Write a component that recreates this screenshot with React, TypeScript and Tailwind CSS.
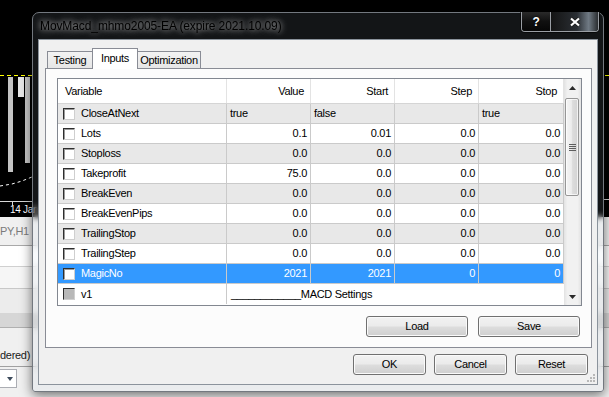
import React from "react";

type Row = { name: string; vals: string[]; words?: boolean; sel?: boolean };

const cols = ["Value", "Start", "Step", "Stop"];

const rows: Row[] = [
  { name: "CloseAtNext", vals: ["true", "false", "", "true"], words: true },
  { name: "Lots", vals: ["0.1", "0.01", "0.0", "0.0"] },
  { name: "Stoploss", vals: ["0.0", "0.0", "0.0", "0.0"] },
  { name: "Takeprofit", vals: ["75.0", "0.0", "0.0", "0.0"] },
  { name: "BreakEven", vals: ["0.0", "0.0", "0.0", "0.0"] },
  { name: "BreakEvenPips", vals: ["0.0", "0.0", "0.0", "0.0"] },
  { name: "TrailingStop", vals: ["0.0", "0.0", "0.0", "0.0"] },
  { name: "TrailingStep", vals: ["0.0", "0.0", "0.0", "0.0"] },
  { name: "MagicNo", vals: ["2021", "2021", "0", "0"], sel: true },
];

function Check({ off }: { off?: boolean }) {
  return (
    <span
      className={
        "block w-[12px] h-[12px] shrink-0 border border-t-[#2e2e2e] border-l-[#2e2e2e] border-r-[#cfcfcf] border-b-[#cfcfcf] " +
        (off ? "bg-[#b8b8b8]" : "bg-white shadow-[inset_1px_1px_0_#9a9a9a]")
      }
    />
  );
}

function Btn({ children, w }: { children: string; w: string }) {
  return (
    <div
      className={
        w +
        " h-[21px] flex items-center justify-center rounded-[3px] border border-[#707070] bg-[linear-gradient(#f2f2f2,#ebebeb_48%,#dddddd_52%,#cfcfcf)] shadow-[inset_0_0_0_1px_#fafafa] text-black"
      }
    >
      {children}
    </div>
  );
}

function Arrow({ down }: { down?: boolean }) {
  return (
    <svg width="7" height="4" viewBox="0 0 7 4">
      <path d={down ? "M0 0H7L3.5 4Z" : "M0 4H7L3.5 0Z"} fill="#2a2a2a" />
    </svg>
  );
}

function ScrollBar() {
  return (
    <div className="w-[17px] flex flex-col bg-[linear-gradient(90deg,#e2e2e2,#f1f1f1_20%,#f1f1f1_80%,#e2e2e2)]">
      <div className="h-[17px] flex items-center justify-center pt-[1px]">
        <Arrow />
      </div>
      <div className="mt-[2px] ml-[1px] w-[14px] h-[98px] rounded-[2px] border border-[#969696] bg-[linear-gradient(90deg,#f5f5f5,#ececec_45%,#dcdcdc_55%,#d3d3d3)] shadow-[inset_0_0_0_1px_rgba(255,255,255,0.7)] flex flex-col items-center justify-center gap-[1px]">
        <span className="block w-[7px] h-px bg-[#5e5e5e]" />
        <span className="block w-[7px] h-px bg-[#5e5e5e]" />
        <span className="block w-[7px] h-px bg-[#5e5e5e]" />
        <span className="block w-[7px] h-px bg-[#5e5e5e]" />
      </div>
      <div className="flex-1" />
      <div className="h-[17px] flex items-center justify-center">
        <Arrow down />
      </div>
    </div>
  );
}

function Chart() {
  return (
    <svg width="32" height="217" viewBox="0 0 32 217" overflow="visible">
      <line x1="0" y1="75.5" x2="32" y2="75.5" stroke="#ffff00" strokeDasharray="4 3" />
      <rect x="8" y="77" width="5" height="95" fill="#c4c4c4" />
      <rect x="18" y="77" width="6" height="20" fill="#e6e6e6" />
      <rect x="25" y="77" width="5" height="86" fill="#c4c4c4" />
      <polyline points="0,186 12,184 22,181 32,177" fill="none" stroke="#ffffff" strokeDasharray="3 3" />
      <line x1="0" y1="201.5" x2="32" y2="201.5" stroke="#d8d8d8" />
      <line x1="12.5" y1="201" x2="12.5" y2="205" stroke="#d8d8d8" />
      <text x="10" y="213" fontSize="10" fill="#ffffff" fontFamily="Liberation Sans, Arial, sans-serif">
        14 Jan
      </text>
    </svg>
  );
}

export default function App() {
  return (
    <div className="relative w-[609px] h-[397px] overflow-hidden bg-black font-['Liberation_Sans',Arial,sans-serif] text-[11px] tracking-[-0.3px] select-none">
      {/* terminal behind the dialog */}
      <div className="flex flex-col h-full">
        <div className="h-[217px] flex justify-between">
          <Chart />
          <svg width="6" height="217" viewBox="0 0 6 217">
            <line x1="2" y1="75.5" x2="6" y2="75.5" stroke="#ffff00" />
            <line x1="0" y1="199.5" x2="6" y2="199.5" stroke="#d8d8d8" />
          </svg>
        </div>
        <div className="flex-1 flex flex-col bg-[#f0f0f0]">
          <div className="h-[28px] flex items-center text-[11px] text-[#7a7a7a]">PY,H1</div>
          <div className="h-[21px] border-t border-[#a9a9a9] bg-white" />
          <div className="h-[22px] border-t border-[#d0d0d0] bg-[#f6f6f6]" />
          <div className="h-[25px] border-t border-[#c8c8c8] bg-[#ececec]" />
          <div className="h-[14px] bg-[#d6d6d6]" />
          <div className="h-[39px] border-t border-[#b0b0b0] flex items-center pt-[16px] text-[#1a1a1a]">dered)</div>
          <div className="flex-1 border-t border-[#a0a0a0] pt-[2px]">
            <div className="w-[17px] h-[19px] border border-l-0 border-[#abadb3] bg-white flex items-center justify-end pr-[3px]">
              <svg width="6" height="4" viewBox="0 0 6 4">
                <path d="M0 0H6L3 4Z" fill="#3d4b5c" />
              </svg>
            </div>
          </div>
        </div>
      </div>

      {/* dialog window */}
      <div className="absolute left-[32px] top-[12px] w-[572px] h-[380px] flex flex-col px-[5px] pb-[6px] rounded-t-[7px] rounded-b-[3px] border border-[#73787f] bg-[rgba(185,205,225,0.1)] backdrop-blur-[3px] shadow-[0_3px_12px_rgba(0,0,0,0.55)]">
        <div className="h-[26px] flex items-start justify-between">
          <div className="h-full flex items-center pl-[2px] text-[12px] tracking-[-0.1px] text-black [text-shadow:0_0_5px_rgba(255,255,255,0.55),0_0_9px_rgba(255,255,255,0.45),0_0_14px_rgba(255,255,255,0.3)]">
            MovMacd_mhmo2005-EA (expire 2021.10.09)
          </div>
          <div className="-mt-px -mr-px flex h-[20px] rounded-b-[4px] border border-t-0 border-[#9a9ea4] overflow-hidden shadow-[0_0_0_1px_rgba(0,0,0,0.6)]">
            <div className="w-[29px] flex items-center justify-center border-r border-[#9a9ea4] bg-[linear-gradient(#2a2a2a,#101010_50%,#060606)] text-white font-bold text-[12px] [text-shadow:0_0_2px_#000]">
              ?
            </div>
            <div className="w-[47px] flex items-center justify-center bg-[linear-gradient(90deg,#141414,#2a2e33_55%,#707a84_80%,#2a2d30)]">
              <svg width="12" height="10" viewBox="0 0 12 10">
                <path d="M2 1.5L10 8.5M10 1.5L2 8.5" stroke="#202020" strokeWidth="4" />
                <path d="M2 1.5L10 8.5M10 1.5L2 8.5" stroke="#ffffff" strokeWidth="2.2" />
              </svg>
            </div>
          </div>
        </div>

        <div className="relative flex-1 flex flex-col border border-[#8b939c] bg-[#f0f0f0] pt-[8px] pl-[6px] pr-[5px]">
          {/* tabs */}
          <div className="h-[20px] flex items-end pl-[2px]">
            <div className="w-[46px] h-[17px] flex items-center justify-center border border-b-0 border-[#898c95] bg-[linear-gradient(#f3f3f3,#e6e6e6)]">
              Testing
            </div>
            <div className="relative z-10 -ml-px -mb-px w-[46px] h-[21px] flex items-center justify-center pb-[2px] border border-b-0 border-[#898c95] bg-white">
              Inputs
            </div>
            <div className="-ml-px w-[64px] h-[17px] flex items-center justify-center border border-b-0 border-[#898c95] bg-[linear-gradient(#f3f3f3,#e6e6e6)]">
              Optimization
            </div>
          </div>

          {/* tab page */}
          <div className="h-[280px] flex flex-col border border-[#898c95] bg-[#fcfcfc] pt-[9px] pl-[11px] pr-[9px]">
            <div className="h-[228px] flex border border-[#828790] bg-white text-black">
              <div className="w-[506px] flex flex-col">
                <div className="grid grid-cols-[169px_84px_84px_84px_85px] h-[25px] border-b border-[#d5d5d5] bg-white">
                  <div className="flex items-center pl-[7px] border-r border-[#e3e3e3]">Variable</div>
                  {cols.map((c) => (
                    <div key={c} className="flex items-center justify-end pr-[6px] border-r border-[#e3e3e3]">
                      {c}
                    </div>
                  ))}
                </div>

                {rows.map((r, i) => {
                  const bg = r.sel ? "bg-[#3399ff] text-white" : i % 2 === 0 ? "bg-[#e8e8e8]" : "bg-white";
                  return (
                    <div key={r.name} className={"grid grid-cols-[169px_84px_84px_84px_85px] h-[20px] " + bg}>
                      <div className="flex items-center gap-[6px] pl-[5px] border-r border-b border-[#cacaca]">
                        <Check />
                        <span>{r.name}</span>
                      </div>
                      {r.vals.map((v, j) => (
                        <div
                          key={j}
                          className={
                            "flex items-center border-r border-b border-[#cacaca] " +
                            (r.words ? "justify-start pl-[3px]" : "justify-end pr-[3px]")
                          }
                        >
                          {v}
                        </div>
                      ))}
                    </div>
                  );
                })}

                <div className="grid grid-cols-[169px_337px] h-[20px] bg-white">
                  <div className="flex items-center gap-[6px] pl-[5px] border-r border-[#cacaca]">
                    <Check off />
                    <span>v1</span>
                  </div>
                  <div className="flex items-center pl-[4px] whitespace-pre">____________MACD Settings</div>
                </div>
              </div>
              <ScrollBar />
            </div>

            <div className="mt-[10px] flex justify-end gap-[10px] pr-[2px]">
              <Btn w="w-[102px]">Load</Btn>
              <Btn w="w-[102px]">Save</Btn>
            </div>
          </div>

          {/* dialog buttons */}
          <div className="mt-[6px] flex justify-end gap-[8px] pr-[4px]">
            <Btn w="w-[73px]">OK</Btn>
            <Btn w="w-[73px]">Cancel</Btn>
            <Btn w="w-[73px]">Reset</Btn>
          </div>

          <svg className="absolute right-[2px] bottom-[2px]" width="9" height="9" viewBox="0 0 9 9">
            <rect x="7" y="1" width="2" height="2" fill="#b8b8b8" />
            <rect x="4" y="4" width="2" height="2" fill="#b8b8b8" />
            <rect x="7" y="4" width="2" height="2" fill="#b8b8b8" />
            <rect x="1" y="7" width="2" height="2" fill="#b8b8b8" />
            <rect x="4" y="7" width="2" height="2" fill="#b8b8b8" />
            <rect x="7" y="7" width="2" height="2" fill="#b8b8b8" />
          </svg>
        </div>
      </div>
    </div>
  );
}
